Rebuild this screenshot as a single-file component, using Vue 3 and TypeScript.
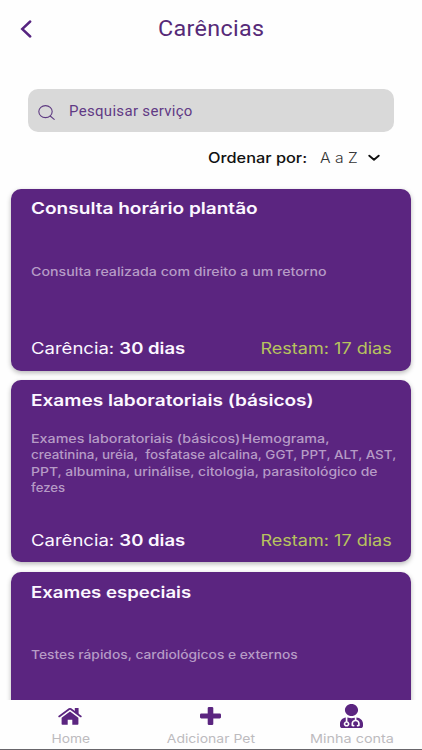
<script setup lang="ts">
interface Line {
  text: string
  stretch: number
}

interface Service {
  name: Line
  lines: Line[]
  waiting?: string
  remaining?: string
}

const services: Service[] = [
  {
    name: { text: 'Consulta horário plantão', stretch: 1.19 },
    lines: [{ text: 'Consulta realizada com direito a um retorno', stretch: 1.182 }],
    waiting: '30 dias',
    remaining: '17 dias',
  },
  {
    name: { text: 'Exames laboratoriais (básicos)', stretch: 1.19 },
    lines: [
      { text: 'Exames laboratoriais (básicos)\u200aHemograma,', stretch: 1.19 },
      { text: 'creatinina, uréia,\u00a0 fosfatase alcalina, GGT, PPT, ALT, AST,', stretch: 1.12 },
      { text: 'PPT, albumina, urinálise, citologia, parasitológico de', stretch: 1.162 },
      { text: 'fezes', stretch: 1.1 },
    ],
    waiting: '30 dias',
    remaining: '17 dias',
  },
  {
    name: { text: 'Exames especiais', stretch: 1.16 },
    lines: [{ text: 'Testes rápidos, cardiológicos e externos', stretch: 1.15 }],
  },
]

const stretched = (line: Line) => ({ transform: `scaleX(${line.stretch})` })
</script>

<template>
  <div class="screen">
    <header class="header">
      <svg class="back" viewBox="0 0 12 18" aria-hidden="true">
        <path d="M10.2 1.5 2.2 9l8 7.5" />
      </svg>
      <h1><span>Carências</span></h1>
    </header>

    <div class="search">
      <svg class="glass" viewBox="0 0 17 15" aria-hidden="true">
        <ellipse cx="7.5" cy="6.6" rx="6.7" ry="6" />
        <path d="m12.2 11 4 3.3" />
      </svg>
      <span class="placeholder">Pesquisar serviço</span>
    </div>

    <div class="sort">
      <span class="sort-label">Ordenar por:</span>
      <span class="sort-value">A a Z</span>
      <svg class="chevron" viewBox="0 0 12 8" aria-hidden="true">
        <path d="m1.3 1.7 4.7 4 4.7-4" />
      </svg>
    </div>

    <main class="list">
      <article v-for="service in services" :key="service.name.text" class="card">
        <h2><span :style="stretched(service.name)">{{ service.name.text }}</span></h2>
        <div class="description">
          <p v-for="line in service.lines" :key="line.text">
            <span :style="stretched(line)">{{ line.text }}</span>
          </p>
        </div>
        <footer v-if="service.waiting" class="terms">
          <span class="waiting">Carência: <b>{{ service.waiting }}</b></span>
          <span class="remaining">Restam: {{ service.remaining }}</span>
        </footer>
      </article>
    </main>

    <nav class="tabs">
      <div class="tab">
        <svg class="home" viewBox="0 0 24 18" aria-hidden="true">
          <path d="M16.8 1h3.8v7L16.8 5.4z" />
          <path class="roof" d="M1.2 9.4 11.3 2.1q.7-.5 1.4 0L22.8 9.4" />
          <path d="M12 4.6 20.4 10.8v6.1q0 .8-.8.8h-5.3v-5H9.7v5H4.4q-.8 0-.8-.8v-6.1z" />
        </svg>
        <span class="home-label">Home</span>
      </div>
      <div class="tab">
        <svg class="plus" viewBox="0 0 21 18" aria-hidden="true">
          <path d="M9 0h3q1.3 0 1.3 1.1v5.5h6.4q1.3 0 1.3 1.1v2.6q0 1.1-1.3 1.1h-6.4v5.5q0 1.1-1.3 1.1H9q-1.3 0-1.3-1.1v-5.5H1.3Q0 11.400 0 10.3V7.700q0-1.100 1.300-1.100h6.400V1.100Q7.700 0 9 0z" />
        </svg>
        <span>Adicionar Pet</span>
      </div>
      <div class="tab">
        <svg class="doctor" viewBox="0 0 448 512" preserveAspectRatio="none" aria-hidden="true">
          <path d="M224 256c70.7 0 128-57.3 128-128S294.7 0 224 0 96 57.3 96 128s57.3 128 128 128zM104 424c0 13.3 10.7 24 24 24s24-10.7 24-24-10.7-24-24-24-24 10.7-24 24zm216-135.4v49c36.5 7.4 64 39.8 64 78.4v41.7c0 7.6-5.4 14.2-12.9 15.7l-32.2 6.4c-4.3.9-8.5-1.9-9.4-6.3l-3.1-15.7c-.9-4.3 1.9-8.6 6.3-9.4l19.3-3.9V416c0-62.8-96-65.1-96 1.9v26.7l19.3 3.9c4.3.9 7.1 5.1 6.3 9.4l-3.1 15.7c-.9 4.3-5.1 7.1-9.4 6.3l-31.2-4.2c-7.9-1.1-13.8-7.8-13.8-15.9V416c0-38.6 27.5-70.9 64-78.4v-45.2c-2.2.7-4.4 1.1-6.6 1.9-18 6.3-37.3 9.8-57.4 9.8s-39.4-3.5-57.4-9.8c-7.4-2.6-14.9-4.2-22.6-5.2v81.6c23.1 6.9 40 28.1 40 53.4 0 30.9-25.1 56-56 56s-56-25.1-56-56c0-25.3 16.9-46.5 40-53.4v-80.4C48.5 301 0 355.8 0 422.4v44.8C0 491.9 20.1 512 44.8 512h358.4c24.7 0 44.8-20.1 44.8-44.8v-44.8c0-72-56.8-130.3-128-133.8z" />
        </svg>
        <span class="account-label">Minha conta</span>
      </div>
    </nav>
  </div>
</template>

<style>
body {
  margin: 0;
  background: #fefefe;
}
</style>

<style scoped>
.screen {
  box-sizing: border-box;
  width: 422px;
  height: 750px;
  display: flex;
  flex-direction: column;
  overflow: hidden;
  background: #fefefe;
  font-family: Inter, 'Noto Sans', sans-serif;
}

h1,
h2,
p {
  margin: 0;
  font-weight: inherit;
}

h1 span,
h2 span,
p span,
.placeholder,
.sort-label,
.sort-value,
.waiting,
.remaining,
.tab span {
  display: inline-block;
  white-space: nowrap;
  transform-origin: left center;
}

.header {
  flex: none;
  display: grid;
  grid-template-columns: 50px 1fr 50px;
  align-items: center;
  height: 57px;
  color: #562a78;
}

.back {
  width: 12px;
  height: 18px;
  margin-left: 20px;
  fill: none;
  stroke: #562480;
  stroke-width: 2.4;
  stroke-linecap: round;
}

h1 {
  text-align: center;
  font: 400 22px/30px Roboto, sans-serif;
}

h1 span {
  letter-spacing: 0.3px;
  transform: scaleX(1.06);
  transform-origin: center;
}

.search {
  flex: none;
  box-sizing: border-box;
  display: flex;
  align-items: center;
  height: 43px;
  margin: 32px 28px 0;
  padding-left: 10px;
  border-radius: 10px;
  background: #d9d9d9;
}

.glass {
  width: 17px;
  height: 15px;
  margin-top: 4px;
  fill: none;
  stroke: #5f3b82;
  stroke-width: 1.1;
  stroke-linecap: round;
}

.placeholder {
  margin-left: 14px;
  color: #613a85;
  font: 400 14px/20px Roboto, sans-serif;
  letter-spacing: 0.3px;
  transform: scaleX(1.07);
}

.sort {
  flex: none;
  display: flex;
  align-items: center;
  height: 50px;
  padding-left: 208px;
}

.sort-label {
  width: 112px;
  color: #111;
  font-size: 14px;
  font-weight: 500;
  transform: scaleX(1.165);
}

.sort-value {
  width: 48px;
  color: #333;
  font-size: 14px;
  font-weight: 300;
  transform: scaleX(1.12);
}

.chevron {
  width: 12px;
  height: 8px;
  margin-top: 1px;
  fill: none;
  stroke: #111;
  stroke-width: 1.9;
  stroke-linecap: round;
  stroke-linejoin: round;
}

.list {
  flex: 1;
  min-height: 0;
  display: flex;
  flex-direction: column;
  gap: 9.8px;
  padding: 6.7px 11px 0;
  overflow: hidden;
}

.card {
  flex: none;
  box-sizing: border-box;
  display: flex;
  flex-direction: column;
  height: 182px;
  padding: 7.3px 19.5px 11.5px;
  border-radius: 10px;
  background: #5b2580;
  box-shadow: 0 2px 5px rgb(0 0 0 / 28%);
  color: #fcf7ff;
}

h2 {
  font-size: 16px;
  font-weight: 600;
  line-height: 24px;
}

.description {
  flex: none;
  display: flex;
  flex-direction: column;
  justify-content: center;
  height: 104px;
  color: #b69bc6;
  font-size: 12px;
  font-weight: 500;
  line-height: 16.4px;
}

.terms {
  display: flex;
  justify-content: space-between;
  margin-top: auto;
  font-size: 15.5px;
  line-height: 20px;
}

.waiting {
  transform: scaleX(1.195);
}

.waiting b {
  font-weight: 600;
}

.remaining {
  color: #b7c35e;
  transform: scaleX(1.165);
  transform-origin: right center;
}

.tabs {
  flex: none;
  box-sizing: border-box;
  display: grid;
  grid-template-columns: repeat(3, 1fr);
  height: 50px;
  border-bottom: 1px solid #67656a;
  background: #fefefe;
}

.tab {
  display: grid;
  grid-template-rows: 31px 16px;
  place-items: center;
  align-content: start;
  color: #bdbbbe;
  font-size: 12px;
  line-height: 16px;
}

.tab span {
  transform: scaleX(1.165);
  transform-origin: center;
}

.tab .home-label {
  transform: scaleX(1.15);
}

.tab .account-label {
  transform: scaleX(1.2);
}

.tab svg {
  fill: #5b2580;
}

.home {
  width: 24px;
  height: 18px;
}

.tab .home .roof {
  fill: none;
  stroke: #5b2580;
  stroke-width: 1.8;
  stroke-linecap: round;
}

.plus {
  width: 21px;
  height: 18px;
}

.doctor {
  width: 23px;
  height: 24px;
}
</style>
